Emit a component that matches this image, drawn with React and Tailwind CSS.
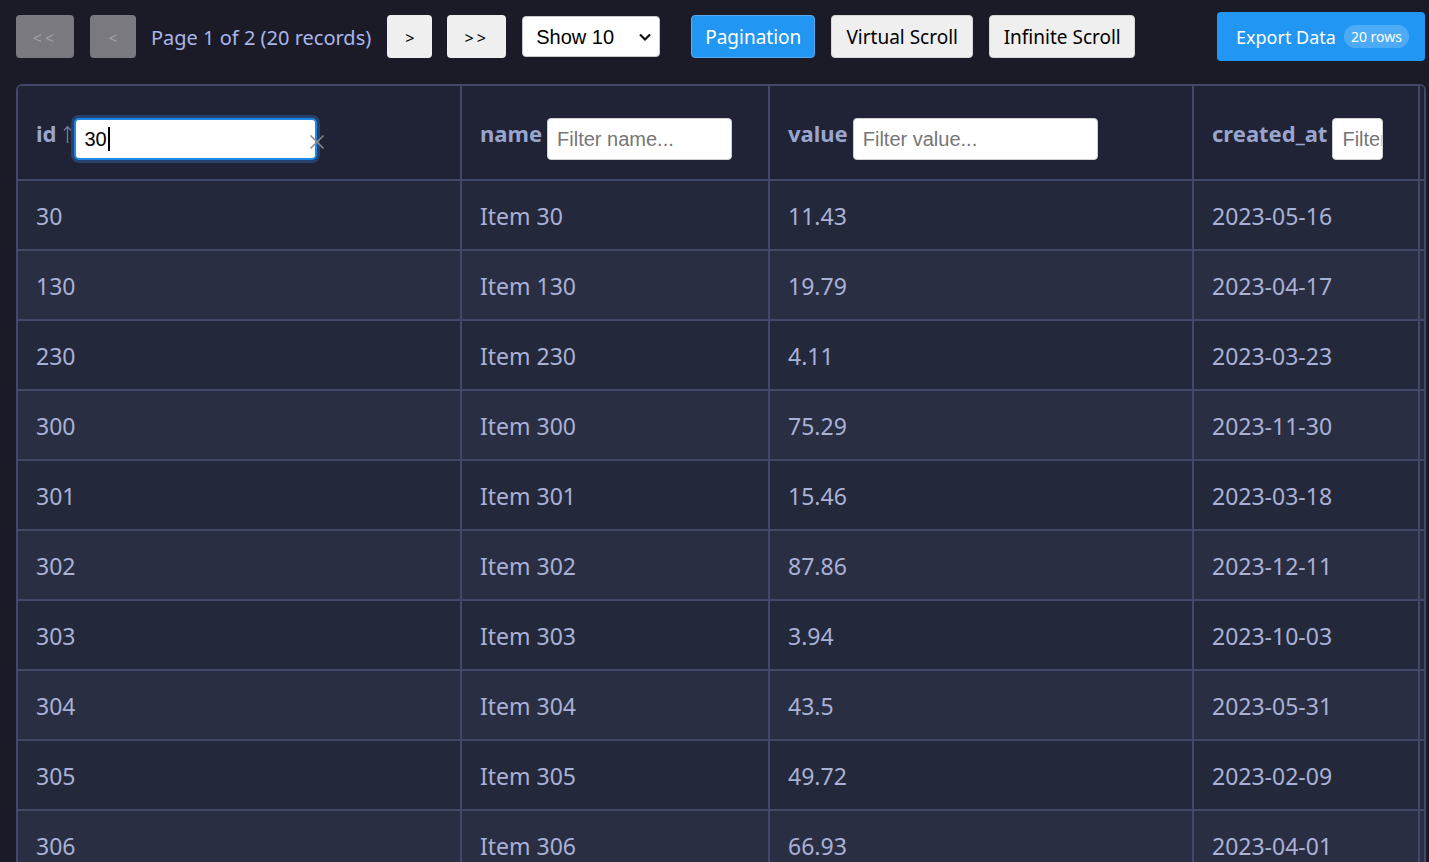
import React from "react";

const rows = [
  ["30", "Item 30", "11.43", "2023-05-16"],
  ["130", "Item 130", "19.79", "2023-04-17"],
  ["230", "Item 230", "4.11", "2023-03-23"],
  ["300", "Item 300", "75.29", "2023-11-30"],
  ["301", "Item 301", "15.46", "2023-03-18"],
  ["302", "Item 302", "87.86", "2023-12-11"],
  ["303", "Item 303", "3.94", "2023-10-03"],
  ["304", "Item 304", "43.5", "2023-05-31"],
  ["305", "Item 305", "49.72", "2023-02-09"],
  ["306", "Item 306", "66.93", "2023-04-01"],
];

const ui = { fontFamily: '"Noto Sans", "Open Sans", sans-serif' };
const arial = { fontFamily: '"Liberation Sans", Arial, sans-serif' };

function HeaderCell({ label, children, arrow }) {
  return (
    <div className="h-[95px] border-r-2 border-b-2 border-[#414868] bg-[#1f2335] flex items-start pt-[32px] pl-[18px] gap-[5px] overflow-hidden">
      <span className="h-[30px] leading-[30px] text-[22px] font-bold text-[#9aa5ce] whitespace-nowrap flex items-center">
        {label}
        {arrow && (
          <svg className="ml-[7px] mt-[2px] mr-[-3px]" width="9" height="19" viewBox="0 0 9 19">
            <path d="M4.5 18 V2 M1 5.5 L4.5 1.5 L8 5.5" fill="none" stroke="#6f7699" strokeWidth="1.4" />
          </svg>
        )}
      </span>
      {children}
    </div>
  );
}

function FilterInput({ placeholder, w }) {
  return (
    <div
      className="h-[42px] shrink-0 rounded-[4px] bg-white border border-[#d0d0d0] pl-[9px] flex items-center text-[20px] text-[#767676] overflow-hidden whitespace-nowrap"
      style={{ ...arial, width: w }}
    >
      {placeholder}
    </div>
  );
}

export default function App() {
  return (
    <div className="h-[862px] overflow-hidden bg-[#1a1b26]" style={ui}>
      {/* Toolbar */}
      <div className="flex items-center pl-4 pt-3 h-[61px] w-[1429px]">
        <button className="w-[58px] h-[43px] rounded-[4px] bg-[#7a7980] text-[#a09fa6] text-[16px] tracking-[3px] pt-[2px]">&lt;&lt;</button>
        <button className="ml-4 w-[46px] h-[43px] rounded-[4px] bg-[#7a7980] text-[#a09fa6] text-[16px] pt-[2px]">&lt;</button>
        <span className="ml-[15px] pt-[3px] text-[20px] text-[#aab6ec] whitespace-nowrap">Page 1 of 2 (20 records)</span>
        <button className="ml-4 w-[45px] h-[43px] rounded-[4px] bg-[#efefef] text-black text-[16px] pt-[2px]">&gt;</button>
        <button className="ml-[15px] w-[59px] h-[43px] rounded-[4px] bg-[#efefef] text-black text-[16px] tracking-[3px] pt-[2px]">&gt;&gt;</button>
        <div
          className="ml-4 w-[138px] h-[41px] rounded-[4px] bg-white border border-[#c8c8c8] flex items-center justify-between pl-[13px] pr-[7px] text-[20px] text-black"
          style={arial}
        >
          <span>Show 10</span>
          <svg width="14" height="10" viewBox="0 0 14 10">
            <path d="M2 2.5 L7 7.5 L12 2.5" fill="none" stroke="#111" strokeWidth="2.2" />
          </svg>
        </div>
        <button className="ml-[31px] w-[124px] h-[43px] rounded-[4px] bg-[#2196f3] border border-[#5aa9f0] text-white text-[19px] pt-[2px]">Pagination</button>
        <button className="ml-4 w-[142px] h-[43px] rounded-[4px] bg-[#efefef] border border-[#d6d6d6] text-black text-[19px] pt-[2px]">Virtual Scroll</button>
        <button className="ml-4 w-[146px] h-[43px] rounded-[4px] bg-[#efefef] border border-[#d6d6d6] text-black text-[19px] pt-[2px]">Infinite Scroll</button>
        <button className="ml-auto mr-[4px] w-[208px] h-[49px] rounded-[4px] bg-[#2196f3] text-white flex items-center pl-[19px] gap-[8px]">
          <span className="text-[18px] pt-[2px]">Export Data</span>
          <span className="rounded-full bg-white/20 px-[7px] h-[23px] leading-[23px] text-[14px]">20 rows</span>
        </button>
      </div>

      {/* Table */}
      <div className="mt-[23px] ml-4 w-[1410px] border-2 border-[#414868] rounded-[6px] overflow-hidden">
        <div className="grid grid-cols-[444px_308px_424px_226px_240px] w-max">
          <HeaderCell label="id" arrow>
            <div className="relative">
              <div
                className="w-[243px] h-[42px] rounded-[5px] bg-white border-2 border-[#1e88e5] shadow-[0_0_0_3px_#26416b] pl-[8px] flex items-center text-[20px] text-black"
                style={arial}
              >
                30<span className="inline-block w-[2px] h-[24px] bg-black ml-[1px]"></span>
              </div>
              <svg className="absolute left-[235px] top-[16px]" width="16" height="16" viewBox="0 0 16 16">
                <path d="M1.5 1.5 L14.5 14.5 M14.5 1.5 L1.5 14.5" stroke="#8c8c8c" strokeWidth="1.5" />
              </svg>
            </div>
          </HeaderCell>
          <HeaderCell label="name">
            <FilterInput placeholder="Filter name..." w="185px" />
          </HeaderCell>
          <HeaderCell label="value">
            <FilterInput placeholder="Filter value..." w="245px" />
          </HeaderCell>
          <HeaderCell label="created_at">
            <FilterInput placeholder="Filter created_at..." w="51px" />
          </HeaderCell>
          <div className="h-[95px] border-b-2 border-[#414868] bg-[#1f2335]"></div>

          {rows.map((r, i) => {
            const bg = i % 2 === 0 ? "bg-[#24283b]" : "bg-[#292e42]";
            return (
              <React.Fragment key={i}>
                {r.map((c, j) => (
                  <div
                    key={j}
                    className={`h-[70px] border-r-2 border-b-2 border-[#414868] ${bg} flex items-center pl-[18px] pt-[3px] text-[23px] text-[#a9b1d6] whitespace-nowrap`}
                  >
                    {c}
                  </div>
                ))}
                <div className={`h-[70px] border-b-2 border-[#414868] ${bg}`}></div>
              </React.Fragment>
            );
          })}
        </div>
      </div>
    </div>
  );
}
